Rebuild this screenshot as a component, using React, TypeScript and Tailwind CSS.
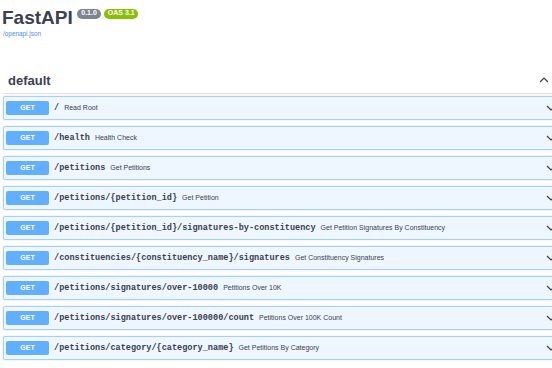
const routes = [
  { path: "/", summary: "Read Root" },
  { path: "/health", summary: "Health Check" },
  { path: "/petitions", summary: "Get Petitions" },
  { path: "/petitions/{petition_id}", summary: "Get Petition" },
  { path: "/petitions/{petition_id}/signatures-by-constituency", summary: "Get Petition Signatures By Constituency" },
  { path: "/constituencies/{constituency_name}/signatures", summary: "Get Constituency Signatures" },
  { path: "/petitions/signatures/over-10000", summary: "Petitions Over 10K" },
  { path: "/petitions/signatures/over-100000/count", summary: "Petitions Over 100K Count" },
  { path: "/petitions/category/{category_name}", summary: "Get Petitions By Category" },
];

function Chevron({ up = false }: { up?: boolean }) {
  return (
    <svg width="10" height="6" viewBox="0 0 10 6" className="shrink-0">
      <polyline
        points={up ? "1,5 5,1 9,5" : "1,1 5,5 9,1"}
        fill="none"
        stroke="#3b4151"
        strokeWidth="1.2"
      />
    </svg>
  );
}

export default function App() {
  return (
    <div className="h-[368px] w-[552px] overflow-hidden bg-white font-['Liberation_Sans',Arial,sans-serif] text-[#3b4151]">
      <div className="w-[562px] pl-[3px] pt-[8px]">
        <div className="flex items-start">
          <h1 className="-ml-[1px] text-[19px] font-bold leading-[19px]">FastAPI</h1>
          <span className="ml-[4px] mt-[0.5px] flex h-[10px] items-center rounded-full bg-[#7d8492] px-[4.5px] text-[7px] font-bold text-white">
            0.1.0
          </span>
          <span className="ml-[3px] mt-[0.5px] flex h-[10px] items-center rounded-full bg-[#89bf04] px-[3.5px] text-[7px] font-bold text-white">
            OAS 3.1
          </span>
        </div>
        <a className="mt-[3px] block text-[6.4px] leading-[8px] text-[#4990e2]">/openapi.json</a>

        <div className="mt-[29px] flex h-[27px] items-center justify-between border-b border-[#dfe0e3] pl-[5px] pr-[13px]">
          <h2 className="text-[13px] font-bold leading-[13px]">default</h2>
          <Chevron up />
        </div>

        <div className="mt-[2px] flex flex-col gap-[6px]">
          {routes.map((r) => (
            <div
              key={r.path}
              className="flex h-[24px] items-center rounded-[2px] border border-[#a6d0fb] bg-[#eef6ff] pl-[2px] pr-[5px] shadow-[0_0_2px_rgba(0,0,0,0.15)]"
            >
              <span className="flex h-[14px] w-[43px] shrink-0 items-center justify-center rounded-[2px] bg-[#61affe] text-[7px] font-bold text-white">
                GET
              </span>
              <span className="ml-[5px] whitespace-nowrap font-['Liberation_Mono','Courier_New',monospace] text-[8.55px] font-bold">
                {r.path}
              </span>
              <span className="ml-[5px] whitespace-nowrap text-[7px]">{r.summary}</span>
              <span className="ml-auto">
                <Chevron />
              </span>
            </div>
          ))}
        </div>
      </div>
    </div>
  );
}
